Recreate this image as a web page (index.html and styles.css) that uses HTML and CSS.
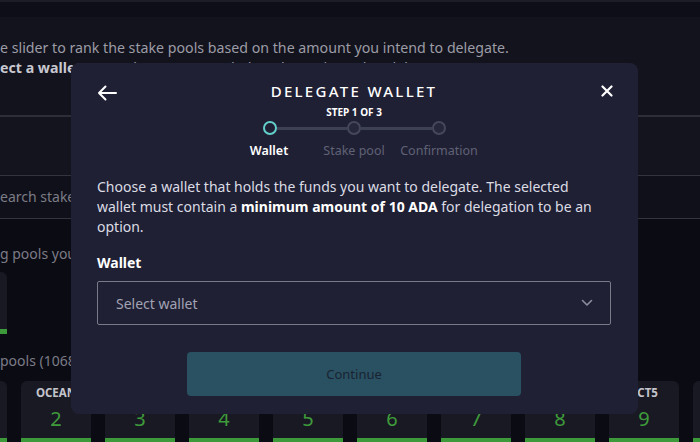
FILE: index.html
```html
<!DOCTYPE html>
<html>
<head>
<meta charset="utf-8">
<link rel="stylesheet" href="styles.css">
</head>
<body>
<div class="page">
  <div class="topline"></div>
  <div class="topbar"></div>
  <div class="intro">
    <p>e slider to rank the stake pools based on the amount you intend to delegate.</p>
    <p><b>ect a wallet</b> to get the recommended pools you intend to delegate.</p>
  </div>
  <div class="strip"></div>
  <div class="search">earch stake pools</div>
  <div class="subtitle">g pools you have delegated to</div>
  <div class="mini-row"><div class="tile mini"></div></div>
  <div class="subtitle second">pools (1068)</div>
  <div class="tiles">
    <div class="tile"><span class="tlabel">AAA</span><span class="tnum">1</span></div>
    <div class="tile"><span class="tlabel">OCEAN</span><span class="tnum">2</span></div>
    <div class="tile"><span class="tlabel">BBB</span><span class="tnum">3</span></div>
    <div class="tile"><span class="tlabel">CCC</span><span class="tnum">4</span></div>
    <div class="tile"><span class="tlabel">DDD</span><span class="tnum">5</span></div>
    <div class="tile"><span class="tlabel">EEE</span><span class="tnum">6</span></div>
    <div class="tile"><span class="tlabel">FFF</span><span class="tnum">7</span></div>
    <div class="tile"><span class="tlabel">GGG</span><span class="tnum">8</span></div>
    <div class="tile"><span class="tlabel">PCT5</span><span class="tnum">9</span></div>
    <div class="tile"><span class="tlabel">HHH</span><span class="tnum">10</span></div>
  </div>
</div>

<div class="modal">
  <div class="head">
    <button class="icon-btn" aria-label="Back">
      <svg width="20" height="16" viewBox="0 0 20 16"><path d="M19 8H2M8.5 1.5L2 8l6.5 6.5" fill="none" stroke="#ffffff" stroke-width="2" stroke-linecap="round" stroke-linejoin="round"/></svg>
    </button>
    <h1 class="title">DELEGATE WALLET</h1>
    <button class="icon-btn close" aria-label="Close">
      <svg width="12" height="12" viewBox="0 0 12 12"><path d="M1.5 1.5l9 9M10.5 1.5l-9 9" fill="none" stroke="#ffffff" stroke-width="2.2" stroke-linecap="round"/></svg>
    </button>
  </div>
  <div class="step-count">STEP 1 OF 3</div>
  <div class="stepper">
    <div class="track">
      <span class="dot active"></span>
      <span class="bar"></span>
      <span class="dot"></span>
      <span class="bar"></span>
      <span class="dot"></span>
    </div>
    <div class="labels">
      <span class="slabel active">Wallet</span>
      <span class="slabel">Stake pool</span>
      <span class="slabel">Confirmation</span>
    </div>
  </div>
  <p class="desc">Choose a wallet that holds the funds you want to delegate. The selected wallet must contain a <b>minimum amount of 10 ADA</b> for delegation to be an option.</p>
  <div class="field-label">Wallet</div>
  <div class="select">
    <span class="placeholder">Select wallet</span>
    <svg width="12" height="8" viewBox="0 0 12 8"><path d="M1.5 1.5L6 6l4.5-4.5" fill="none" stroke="#8c8d9e" stroke-width="1.6" stroke-linecap="round" stroke-linejoin="round"/></svg>
  </div>
  <div class="actions">
    <button class="continue">Continue</button>
  </div>
</div>
</body>
</html>
```

FILE: styles.css
```css
* { box-sizing: border-box; }
html, body {
  margin: 0;
  padding: 0;
  width: 700px;
  height: 442px;
  overflow: hidden;
  background: #0b0b14;
  font-family: "Noto Sans", "Open Sans", sans-serif;
}
.page {
  width: 700px;
  height: 442px;
  overflow: hidden;
}
.topline { height: 2px; background: #1d1d27; }
.topbar { height: 15px; background: #0e0e18; }
.intro {
  height: 100px;
  background: #13131d;
  padding-top: 21px;
  border-bottom: 2px solid #2e2e38;
}
.intro p {
  margin: 0;
  font-size: 14.2px;
  line-height: 20px;
  color: #9c9ca6;
  white-space: nowrap;
}
.intro b { color: #c8c8d0; font-weight: 700; }
.strip { height: 58px; background: #14141e; }
.search {
  height: 44px;
  background: #10101a;
  border-top: 1px solid #34343e;
  border-bottom: 1px solid #34343e;
  font-size: 14px;
  line-height: 42px;
  color: #7c7c86;
  white-space: nowrap;
}
.subtitle {
  margin-top: 25px;
  font-size: 14px;
  line-height: 20px;
  color: #7c7c86;
  white-space: nowrap;
}
.mini-row {
  margin-top: 8px;
  display: flex;
  margin-left: -63px;
}
.tile.mini { height: 62px; }
.subtitle.second { margin-top: 17px; }
.tiles {
  margin-top: 10px;
  display: flex;
  gap: 14px;
  margin-left: -63px;
}
.tile {
  flex: 0 0 70px;
  width: 70px;
  height: 62px;
  background: #191923;
  border-radius: 6px 6px 0 0;
  border-bottom: 5px solid #3d9a3a;
  display: flex;
  flex-direction: column;
  align-items: center;
  padding-top: 4px;
}
.tlabel {
  font-size: 11.5px;
  font-weight: 700;
  line-height: 16px;
  color: #c4c4cc;
}
.tnum {
  margin-top: 5px;
  font-size: 20px;
  line-height: 26px;
  color: #3e9b3b;
}

.modal {
  position: absolute;
  left: 71px;
  top: 63px;
  width: 567px;
  height: 351px;
  background: #1f2034;
  border-radius: 8px;
  padding: 18px 27px 0 26px;
  color: #e2e2ea;
}
.head {
  display: grid;
  grid-template-columns: 40px 1fr 40px;
  align-items: center;
  height: 20px;
}
.icon-btn {
  background: none;
  border: 0;
  padding: 0;
  display: flex;
  align-items: center;
  cursor: pointer;
}
.icon-btn.close { justify-content: flex-end; margin-right: -2px; }
.icon-btn svg { display: block; }
.head .icon-btn:first-child { margin-top: 4px; }
.title {
  margin: 0;
  text-align: center;
  font-size: 15px;
  font-weight: 500;
  letter-spacing: 2.3px;
  line-height: 20px;
  color: #ffffff;
}
.step-count {
  margin-top: 4px;
  text-align: center;
  font-size: 10px;
  font-weight: 700;
  line-height: 14px;
  color: #ffffff;
}
.stepper {
  display: flex;
  flex-direction: column;
  align-items: center;
  margin-top: 1px;
}
.track {
  display: flex;
  align-items: center;
  width: 183px;
  height: 16px;
}
.dot {
  width: 14px;
  height: 14px;
  border-radius: 50%;
  border: 2px solid #45475a;
  background: #26273b;
  flex: none;
}
.dot.active { border-color: #63cfcb; background: #1f2034; }
.bar { flex: 1; height: 3px; background: #3d3f52; }
.labels {
  display: grid;
  grid-template-columns: 85px 85px 85px;
  margin-top: 6px;
}
.slabel {
  text-align: center;
  font-size: 12.5px;
  line-height: 18px;
  color: #606275;
  white-space: nowrap;
}
.slabel.active { color: #ffffff; font-weight: 600; }
.desc {
  margin: 17px 0 0;
  font-size: 14px;
  line-height: 20px;
  color: #dcdce4;
}
.desc b { color: #ffffff; font-weight: 700; }
.field-label {
  margin-top: 16px;
  font-size: 14px;
  font-weight: 700;
  line-height: 20px;
  color: #ffffff;
}
.select {
  margin-top: 8px;
  height: 44px;
  border: 1px solid #7a7b88;
  border-radius: 2px;
  display: flex;
  align-items: center;
  justify-content: space-between;
  padding: 0 17px 0 18px;
}
.placeholder { font-size: 14px; color: #a2a3b2; }
.actions {
  margin-top: 27px;
  display: flex;
  justify-content: center;
}
.continue {
  width: 334px;
  height: 44px;
  border: 0;
  border-radius: 4px;
  background: #295161;
  color: #1a2333;
  font-family: "Noto Sans", "Open Sans", sans-serif;
  font-size: 13px;
}
```
